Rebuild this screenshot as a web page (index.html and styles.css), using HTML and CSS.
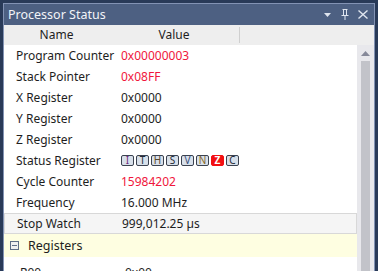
FILE: index.html
```html
<!DOCTYPE html>
<html lang="en">
<head>
  <meta charset="UTF-8">
  <title>Processor Status</title>
  <link rel="stylesheet" href="styles.css">
</head>
<body>
  <div class="window">
    <!-- Title bar -->
    <div class="titlebar">
      <span class="title">Processor Status</span>
      <div class="tools">
        <svg width="8" height="5" viewBox="0 0 8 5"><path d="M0 0H7L3.5 4Z" fill="#dfe5ef"/></svg>
        <svg width="8" height="11" viewBox="0 0 8 11"><path d="M1.5 0.5H6.5M2.5 0.5V6.5M5.5 0.5V6.5M0.5 6.5H7.5M4 6.5V11" stroke="#dfe5ef" fill="none"/></svg>
        <svg width="10" height="9" viewBox="0 0 10 9"><path d="M0.5 0.5L9.5 8.5M9.5 0.5L0.5 8.5" stroke="#dfe5ef" stroke-width="1.4"/></svg>
      </div>
    </div>

    <!-- Column header -->
    <div class="header">
      <div class="col-name">Name</div>
      <div class="col-value">Value</div>
      <div class="col-rest"></div>
    </div>

    <div class="content">
      <div class="grid">
        <div class="row"><span class="name">Program Counter</span><span class="value red">0x00000003</span></div>
        <div class="row"><span class="name">Stack Pointer</span><span class="value red">0x08FF</span></div>
        <div class="row"><span class="name">X Register</span><span class="value">0x0000</span></div>
        <div class="row"><span class="name">Y Register</span><span class="value">0x0000</span></div>
        <div class="row"><span class="name">Z Register</span><span class="value">0x0000</span></div>
        <div class="row">
          <span class="name">Status Register</span>
          <span class="value flags">
            <span class="flag c-i">I</span>
            <span class="flag">T</span>
            <span class="flag c-h">H</span>
            <span class="flag">S</span>
            <span class="flag c-v">V</span>
            <span class="flag c-n">N</span>
            <span class="flag on">Z</span>
            <span class="flag">C</span>
          </span>
        </div>
        <div class="row"><span class="name">Cycle Counter</span><span class="value red">15984202</span></div>
        <div class="row"><span class="name">Frequency</span><span class="value">16.000 MHz</span></div>
        <div class="row selected"><span class="name">Stop Watch</span><span class="value">999,012.25 µs</span></div>
        <div class="row category"><span class="toggle"></span><span class="cat-name">Registers</span></div>
        <div class="row sub-row"><span class="name sub">R00</span><span class="value">0x00</span></div>
      </div>

      <!-- Vertical scrollbar -->
      <div class="scrollbar">
        <div class="arrow">
          <svg width="9" height="5" viewBox="0 0 9 5"><path d="M0 5H9L4.5 0Z" fill="#868999"/></svg>
        </div>
        <div class="thumb"></div>
      </div>
    </div>
  </div>
</body>
</html>
```

FILE: styles.css
```css
body {
  margin: 0;
  background-color: #293a58;
  font-family: 'Noto Sans', 'Open Sans', sans-serif;
  font-size: 12px;
  overflow: hidden;
}
.window {
  margin: 3px 3px 0 3px;
  height: 268px;
  border: 1px solid #8393b4;
  border-bottom: none;
  background-color: #fff;
  display: flex;
  flex-direction: column;
  overflow: hidden;
}
.titlebar {
  height: 21px;
  flex: none;
  background-color: #4d6082;
  color: #f2f4f8;
  display: flex;
  align-items: center;
  padding: 0 6px 0 4px;
}
.title {
  flex: 1;
  font-size: 12.5px;
}
.tools {
  display: flex;
  align-items: center;
  gap: 9px;
}
.tools svg:first-child {
  margin-top: 1px;
}
.header {
  height: 20px;
  flex: none;
  display: flex;
  background-color: #eeeeee;
  color: #1e1e1e;
  line-height: 20px;
}
.col-name {
  width: 105px;
  text-align: center;
}
.col-value {
  width: 130px;
  text-align: center;
  border-right: 1px solid #cfcfcf;
  margin: 2px 0;
  line-height: 16px;
}
.col-rest {
  flex: 1;
}
.content {
  flex: 1;
  display: flex;
  min-height: 0;
}
.grid {
  flex: 1;
  overflow: hidden;
}
.row {
  height: 21px;
  display: flex;
  align-items: center;
  color: #1e1e1e;
  box-sizing: border-box;
}
.name {
  width: 105px;
  padding-left: 12px;
  flex: none;
}
.name.sub {
  padding-left: 16px;
}
.sub-row {
  margin-top: 5px;
}
.value {
  flex: 1;
}
.red {
  color: #f0163c;
}
.selected {
  background-color: #f5f5f5;
  border: 1px solid #d8d8d8;
  height: 21px;
}
.category {
  height: 23px;
  background-color: #fefee1;
}
.toggle {
  width: 7px;
  height: 7px;
  border: 1px solid #5f6e86;
  background: linear-gradient(#5f6e86, #5f6e86) center / 5px 1px no-repeat, #f0f0f0;
  margin: 0 9px 0 6px;
}
.cat-name {
  font-size: 12.5px;
}
.flags {
  display: flex;
  gap: 2px;
}
.flag {
  width: 11px;
  height: 9px;
  border: 1px solid #3b4250;
  border-radius: 2px;
  background-color: #d8e0ea;
  color: #242a36;
  font-size: 10px;
  line-height: 9px;
  text-align: center;
}
.flag.c-i { color: #6b2a7a; }
.flag.c-h { color: #5a4a2e; }
.flag.c-v { color: #3b4e7a; }
.flag.c-n { color: #8a6a2a; }
.flag.on {
  background-color: #f20f12;
  border-color: #f20f12;
  color: #fff;
  font-weight: bold;
}
.scrollbar {
  width: 17px;
  flex: none;
  background-color: #e8e8ec;
  display: flex;
  flex-direction: column;
  align-items: center;
}
.arrow {
  height: 16px;
  display: flex;
  align-items: center;
  justify-content: center;
}
.thumb {
  width: 9px;
  flex: 1;
  background-color: #c2c3c9;
}
```
